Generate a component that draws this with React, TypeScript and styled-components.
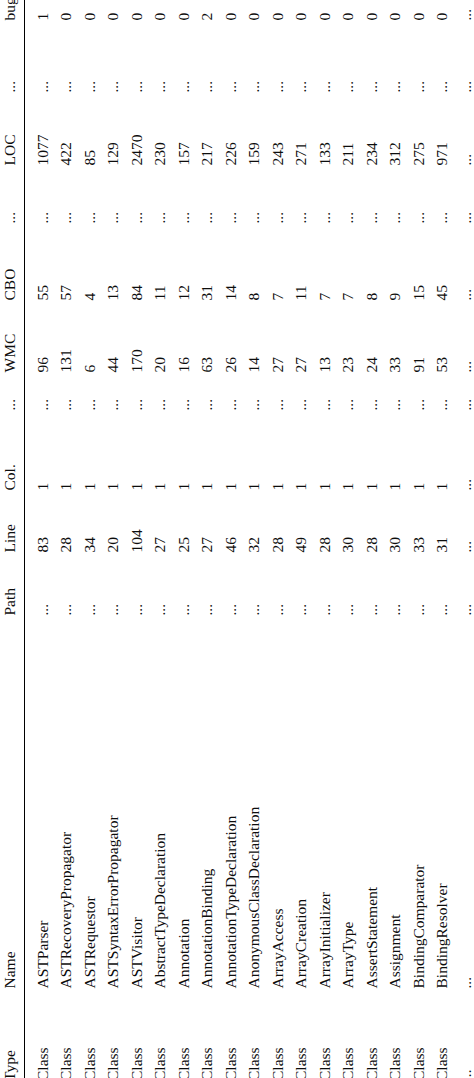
import React, { FC } from "react";
import styled, { createGlobalStyle } from "styled-components";

type Row = [string, string, string, string, string, string, string, string, string, string, string, string];

const DOTS = "...";

const HEADERS: Row = ["Type", "Name", "Path", "Line", "Col.", DOTS, "WMC", "CBO", DOTS, "LOC", DOTS, "bug"];

// name, line, wmc, cbo, loc, bug
const CLASSES: [string, string, string, string, string, string][] = [
  ["ASTParser", "83", "96", "55", "1077", "1"],
  ["ASTRecoveryPropagator", "28", "131", "57", "422", "0"],
  ["ASTRequestor", "34", "6", "4", "85", "0"],
  ["ASTSyntaxErrorPropagator", "20", "44", "13", "129", "0"],
  ["ASTVisitor", "104", "170", "84", "2470", "0"],
  ["AbstractTypeDeclaration", "27", "20", "11", "230", "0"],
  ["Annotation", "25", "16", "12", "157", "0"],
  ["AnnotationBinding", "27", "63", "31", "217", "2"],
  ["AnnotationTypeDeclaration", "46", "26", "14", "226", "0"],
  ["AnonymousClassDeclaration", "32", "14", "8", "159", "0"],
  ["ArrayAccess", "28", "27", "7", "243", "0"],
  ["ArrayCreation", "49", "27", "11", "271", "0"],
  ["ArrayInitializer", "28", "13", "7", "133", "0"],
  ["ArrayType", "30", "23", "7", "211", "0"],
  ["AssertStatement", "28", "24", "8", "234", "0"],
  ["Assignment", "30", "33", "9", "312", "0"],
  ["BindingComparator", "33", "91", "15", "275", "0"],
  ["BindingResolver", "31", "53", "45", "971", "0"],
];

const ROWS: Row[] = [
  ...CLASSES.map(
    ([name, line, wmc, cbo, loc, bug]): Row => [
      "Class", name, DOTS, line, "1", DOTS, wmc, cbo, DOTS, loc, DOTS, bug,
    ]
  ),
  Array(12).fill(DOTS) as Row,
];

const GlobalStyle = createGlobalStyle`
  html, body {
    margin: 0;
    padding: 0;
    background: #fff;
  }
`;

export default function App() {
  return (
    <>
      <GlobalStyle />
      <Page>
        <Sheet>
          <HeaderRow>
            {HEADERS.map((h, i) => (
              <Cell key={i}>{h}</Cell>
            ))}
          </HeaderRow>
          <Rule />
          <Body>
            {ROWS.map((row, r) => (
              <TableRow key={r} cells={row} />
            ))}
          </Body>
        </Sheet>
      </Page>
    </>
  );
}

const TableRow: FC<{ cells: Row }> = ({ cells }) => (
  <DataRow>
    {cells.map((c, i) => (
      <Cell key={i}>{c}</Cell>
    ))}
  </DataRow>
);

const Page = styled.div`
  width: 474px;
  height: 1078px;
  overflow: hidden;
  background: #fff;
`;

// the table is printed sideways: laid out flat, then turned a quarter left
const Sheet = styled.div`
  display: flex;
  flex-direction: column;
  width: 1081px;
  height: 474px;
  transform-origin: 0 0;
  transform: translateY(1081px) rotate(-90deg);
  font-family: "Liberation Serif", "Times New Roman", serif;
  font-size: 15.5px;
  color: #0d0d0d;
`;

const Grid = styled.div`
  display: grid;
  grid-template-columns: 92.5px 373px 63px 62px 80px 38px 72px 77px 58px 73px 72px 1fr;
  white-space: nowrap;
`;

const HeaderRow = styled(Grid)`
  flex: none;
  line-height: 20px;
  padding-bottom: 3.5px;
`;

const Rule = styled.hr`
  flex: none;
  margin: 0;
  border: none;
  border-top: 1.5px solid #000;
  height: 0;
`;

const Body = styled.div`
  flex: none;
  margin-top: 6px;
`;

const DataRow = styled(Grid)`
  line-height: 23.5px;
`;

const Cell = styled.span`
  text-align: left;
`;
